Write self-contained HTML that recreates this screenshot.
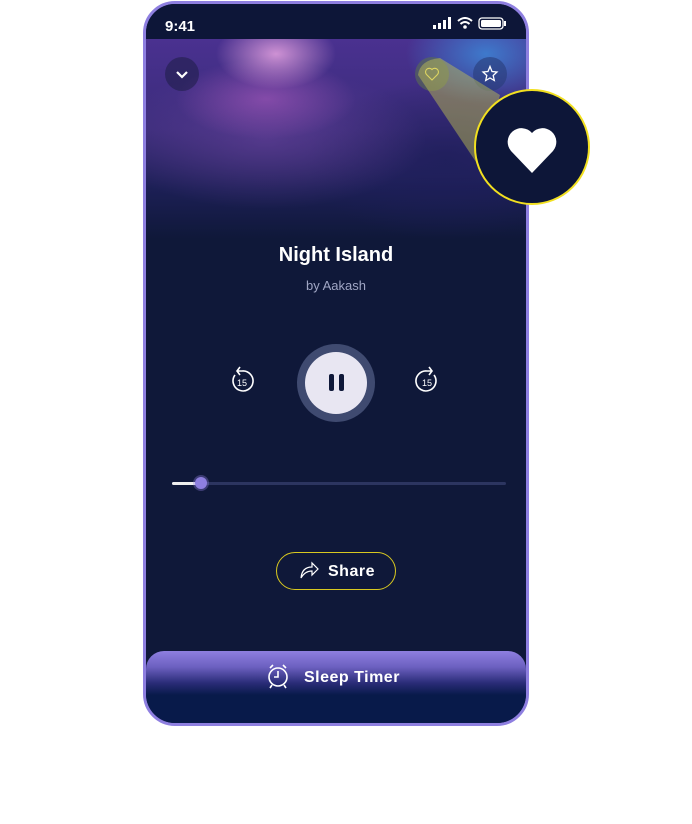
<!DOCTYPE html>
<html><head><style>
body{margin:0;width:692px;height:824px;background:#fff;position:relative;overflow:hidden;font-family:"Liberation Sans",sans-serif}
.phone{position:absolute;left:143px;top:1px;width:380px;height:719px;border:3px solid #8e7fe0;border-radius:32px;background:#0f1839;overflow:hidden}
.status{position:absolute;left:0;top:0;width:100%;height:35px;background:#0d1638;color:#fff}
.img{position:absolute;left:0;top:35px;width:100%;height:200px;
background:
radial-gradient(ellipse 60px 35px at 130px 15px,rgba(240,170,230,.8),transparent),
radial-gradient(ellipse 90px 40px at 120px 60px,rgba(170,90,190,.6),transparent),
radial-gradient(ellipse 80px 50px at 340px 15px,rgba(60,140,220,.8),transparent),
radial-gradient(ellipse 160px 70px at 120px 100px,rgba(110,70,160,.55),transparent),
radial-gradient(ellipse 140px 80px at 300px 120px,rgba(30,30,90,.8),transparent),
linear-gradient(180deg,#4a3190 0%,#3a2c7a 45%,#1c1f55 75%,#0f1839 100%)}
.btn{position:absolute;width:34px;height:34px;border-radius:50%;background:rgba(30,30,70,.55)}
.t{position:absolute;color:#fff;text-align:center;width:100%}
</style></head><body>
<div class="phone">
 <div class="status">
  <div style="position:absolute;left:19px;top:14px;font-weight:bold;font-size:15px">9:41</div>
  <svg style="position:absolute;left:287px;top:13px" width="80" height="14">
   <rect x="0" y="8" width="3" height="4" fill="#fff"/><rect x="5" y="6" width="3" height="6" fill="#fff"/><rect x="10" y="3" width="3" height="9" fill="#fff"/><rect x="15" y="0" width="3" height="12" fill="#fff"/>
   <path d="M25 4 Q32 -2 39 4 M27.5 7 Q32 3 36.5 7" stroke="#fff" stroke-width="2" fill="none"/><circle cx="32" cy="10" r="1.8" fill="#fff"/>
   <rect x="46" y="1" width="24" height="11" rx="3" stroke="#fff" stroke-width="1.3" fill="none"/><rect x="48" y="3" width="20" height="7" rx="1.5" fill="#fff"/><rect x="71" y="4" width="2" height="5" fill="#fff"/>
  </svg>
 </div>
 <div class="img"></div>
 <div class="btn" style="left:19px;top:53px"><svg width="34" height="34"><path d="M12 15 L17 20 L22 15" stroke="#fff" stroke-width="2.2" fill="none"/></svg></div>
 <div class="btn" style="left:269px;top:53px;background:rgba(90,110,80,.6)"><svg width="34" height="34"><path d="M17 23 L11.5 17.5 A3.2 3.2 0 0 1 17 12.5 A3.2 3.2 0 0 1 22.5 17.5 Z" stroke="#f0e070" stroke-width="1.1" fill="none"/></svg></div>
 <div class="btn" style="left:327px;top:53px;background:rgba(40,60,120,.6)"><svg width="34" height="34"><path d="M17 9.5 L19 14.5 L24 15 L20.2 18.5 L21.3 23.5 L17 21 L12.7 23.5 L13.8 18.5 L10 15 L15 14.5 Z" stroke="#fff" stroke-width="1.3" fill="none"/></svg></div>
 <div class="t" style="top:240px;font-size:20px;font-weight:bold">Night Island</div>
 <div class="t" style="top:274px;font-size:13px;color:#a0a6c4">by Aakash</div>
 <svg style="position:absolute;left:81px;top:361px" width="30" height="30"><path d="M8 10 A10 10 0 1 0 15 6 L11 6 M13 2 L10 6 L13 10" stroke="#fff" stroke-width="1.6" fill="none"/><text x="15" y="21" font-size="9" fill="#fff" text-anchor="middle" font-family="Liberation Sans">15</text></svg>
 <svg style="position:absolute;left:266px;top:361px" width="30" height="30"><path d="M22 10 A10 10 0 1 1 15 6 L19 6 M17 2 L20 6 L17 10" stroke="#fff" stroke-width="1.6" fill="none"/><text x="15" y="21" font-size="9" fill="#fff" text-anchor="middle" font-family="Liberation Sans">15</text></svg>
 <div style="position:absolute;left:151px;top:340px;width:78px;height:78px;border-radius:50%;background:#3f4a70"></div>
 <div style="position:absolute;left:159px;top:348px;width:62px;height:62px;border-radius:50%;background:#e8e6f2"></div>
 <div style="position:absolute;left:183px;top:370px;width:5px;height:17px;border-radius:2px;background:#0f1839"></div>
 <div style="position:absolute;left:193px;top:370px;width:5px;height:17px;border-radius:2px;background:#0f1839"></div>
 <div style="position:absolute;left:26px;top:478px;width:334px;height:3px;background:#2c3560;border-radius:2px"></div>
 <div style="position:absolute;left:26px;top:478px;width:30px;height:3px;background:#eee;border-radius:2px"></div>
 <div style="position:absolute;left:49px;top:473px;width:12px;height:12px;border-radius:50%;background:#8e7fe0;box-shadow:0 0 0 2px rgba(142,127,224,.35)"></div>
 <div style="position:absolute;left:130px;top:548px;width:118px;height:36px;border:1.5px solid #d8c820;border-radius:20px"></div>
 <svg style="position:absolute;left:152px;top:555px" width="22" height="22"><path d="M3 19 Q4 8 14 8 L14 4 L20 10 L14 16 L14 12 Q7 12 3 19 Z" stroke="#fff" stroke-width="1.2" fill="none"/></svg>
 <div style="position:absolute;left:182px;top:559px;color:#fff;font-size:16px;font-weight:bold;letter-spacing:.5px">Share</div>
 <div style="position:absolute;left:0;top:647px;width:100%;height:80px;border-radius:18px 18px 0 0;background:linear-gradient(180deg,#8e7fe0 0%,#6c60c0 20%,#2a2c78 40%,#081a4a 55%,#081a4a 100%)"></div>
 <svg style="position:absolute;left:119px;top:658px" width="26" height="28"><circle cx="13" cy="15" r="9" stroke="#fff" stroke-width="1.6" fill="none"/><path d="M13 9 L13 15 L9 15 M5 6 L8 3 M21 6 L18 3 M7 23 L5 26 M19 23 L21 26" stroke="#fff" stroke-width="1.6" fill="none"/></svg>
 <div style="position:absolute;left:158px;top:665px;color:#fff;font-size:16px;font-weight:bold;letter-spacing:.5px">Sleep Timer</div>
</div>
<svg style="position:absolute;left:0;top:0" width="692" height="824">
 <path d="M418 75 Q420 60 440 58 L500 95 L480 168 Z" fill="rgba(200,200,80,.45)"/>
 <circle cx="532" cy="147" r="57" fill="#0d1638" stroke="#f2e020" stroke-width="2"/>
 <path d="M532 173 L511 151 A12 12 0 0 1 532 133 A12 12 0 0 1 553 151 Z" fill="#fff"/>
</svg>
</body></html>
